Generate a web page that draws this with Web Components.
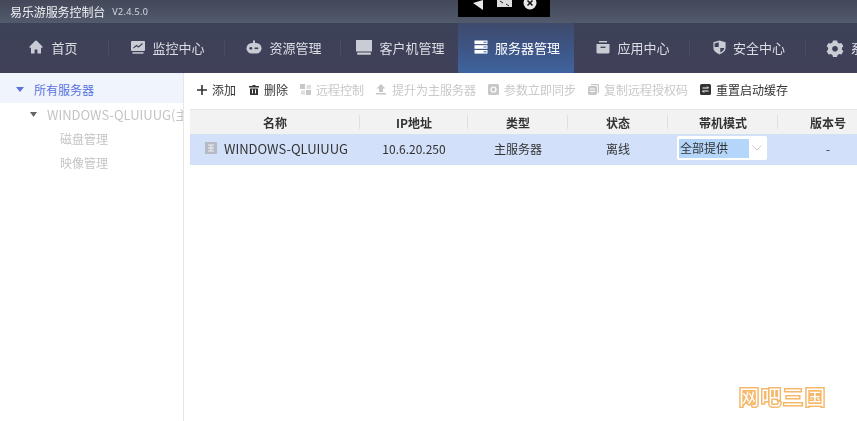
<!DOCTYPE html>
<html lang="zh"><head><meta charset="utf-8"><title>易乐游服务控制台</title>
<style>
html,body{margin:0;height:100%;overflow:hidden;background:#fff}
body{font-family:"Noto Sans CJK SC","Noto Sans",sans-serif;font-size:12px}
</style></head><body>
<yly-app></yly-app>
<script>
const icons={
home:'<path d="M7 .6C6.500 .6 6 1 5.500 1.400L.5 6.500 V7.800H2V13.600H5.600V9.400H8.400V13.600H12V7.800H13.500V6.500L8.500 1.400C8 1 7.500 .6 7 .6z" fill="currentColor"/>',
monitor:'<rect x="0" y="1" width="14" height="10" rx="1" fill="currentColor"/><path d="M2.500 8l3-2.600 2 1.600 4-3.500" stroke="#3c4056" stroke-width="1.100" fill="none"/><rect x="1.500" y="12.200" width="11" height="1.500" fill="currentColor"/>',
robot:'<rect x="7" y=".5" width="2" height="3" fill="currentColor"/><rect x=".5" y="3" width="15" height="10.500" rx="5.200" fill="currentColor"/><circle cx="4.800" cy="8.300" r="1.400" fill="#3c4056"/><rect x="8.600" y="7.500" width="3.600" height="1.600" fill="#3c4056"/>',
pc:'<rect x="0" y="0" width="16" height="11.500" fill="currentColor"/><rect x="1" y="12.500" width="14" height="2.200" rx="1" fill="currentColor"/>',
server:'<rect x=".5" y=".5" width="13" height="3.600" fill="currentColor"/><rect x=".5" y="5.200" width="13" height="3.600" fill="currentColor"/><rect x=".5" y="10" width="13" height="3.600" fill="currentColor"/><path d="M9.500 2.300h3M9.500 7h3M9.500 11.800h3" stroke="#47689f" stroke-width="1"/>',
app:'<rect x="3" y="1" width="8" height="1.400" fill="currentColor"/><path d="M.5 4h13V12a1.500 1.500 0 0 1-1.500 1.500H2A1.500 1.500 0 0 1 .5 12z" fill="currentColor"/><rect x="4.500" y="6.600" width="5" height="1.300" fill="#3c4056"/>',
shield:'<path d="M6.500 .4 12.600 2.300V8c0 3-3 5-6.100 6.400C3.400 13 .4 11 .4 8V2.300z" fill="currentColor"/><path d="M5.700 2.200 1.600 3.400V7H5.700zM7.300 8H11.300C11 10 9 11.700 7.300 12.600z" fill="#3c4056"/>',
gear:'<path fill-rule="evenodd" fill="currentColor" d="M6 .4h4l.6 2 1.800 1 2-.5 2 3.400-1.500 1.500v1.900l1.500 1.500-2 3.400-2-.5-1.800 1-.6 2H6l-.6-2-1.800-1-2 .5-2-3.400L1.100 9.700V7.800L-.4 6.300l2-3.400 2 .5 1.800-1zM8 5.900a2.900 2.900 0 1 0 .01 0z"/>',
plus:'<path d="M5 0v10M0 5h10" stroke="currentColor" stroke-width="1.600"/>',
trash:'<path d="M3.500 1V0h3v1H10v1.500H0V1z M1 3.500h8V10H1z" fill="currentColor"/><path d="M3.500 4.500v4M6.500 4.500v4" stroke="#fff"/>',
remote:'<rect x="0" y="0" width="5" height="5" fill="currentColor"/><rect x="6.500" y="1" width="4.500" height="4" fill="currentColor" opacity=".6"/><rect x="1" y="6.500" width="4" height="4" fill="currentColor" opacity=".6"/><rect x="6" y="6" width="5" height="5" fill="currentColor"/>',
up:'<path d="M5 0 9.500 4.500H7V8H3V4.500H.5z M0 9h10v1.500H0z" fill="currentColor"/>',
sync:'<rect width="11" height="11" rx="1.500" fill="currentColor"/><circle cx="5.500" cy="5.500" r="2.500" fill="none" stroke="#fff" stroke-width="1.200"/>',
copy:'<path d="M3 0h7a1 1 0 0 1 1 1v8H9.800V1.200H3z" fill="currentColor"/><rect y="2" width="9" height="9" rx="1.500" fill="currentColor"/><path d="M2 5h5M2 7.500h5" stroke="#fff"/>',
reset:'<rect width="11" height="11" rx="1.500" fill="currentColor"/><path d="M2.500 4h6L7 2.500M8.500 7h-6L4 8.500" stroke="#fff" fill="none"/>'
};
function svg(n,w,h,vb){return `<svg width="${w}" height="${h}" viewBox="0 0 ${vb||w+' '+h}" style="display:block;flex:none;overflow:visible">${icons[n]}</svg>`}
class Base extends HTMLElement{
 constructor(){super();this.attachShadow({mode:'open'}).innerHTML=this.constructor.html}
}
function def(name,html,extra){
 const c=class extends Base{static html=html};
 if(extra)Object.assign(c.prototype,extra);
 customElements.define(name,c);
}
def('yly-titlebar',`<style>:host{display:flex;align-items:center;height:23px;padding-left:10px;background:linear-gradient(#434859,#525a6d);color:#f0f1f4;position:relative;filter:blur(.35px)}
b{font-weight:400;font-size:12px;letter-spacing:-.1px}i{font-style:normal;font-size:9px;margin-left:7px;color:#d6d9e0;font-family:"Noto Sans",sans-serif;letter-spacing:.35px}
.ov{position:absolute;left:458px;top:0;width:92px;height:17px;background:#000;display:flex;color:#eee}
.ov svg{position:absolute;top:0}</style><b>易乐游服务控制台</b><i>V2.4.5.0</i>
<div class="ov"><svg style="left:14px" width="12" height="10" viewBox="0 0 12 10"><path d="M11 0v10L1 3z" fill="#e8e8e8"/></svg><svg style="left:39px" width="15" height="7" viewBox="0 0 15 7"><path d="M0 0h15v7H0z" fill="#ddd"/><path d="M3 1l3 2M12 6l-3-2" stroke="#222"/></svg><svg style="left:65px" width="14" height="10" viewBox="0 0 14 10"><circle cx="7" cy="3" r="6.500" fill="#e8e8e8"/><path d="M4.500 .5l5 5M9.500 .5l-5 5" stroke="#111" stroke-width="1.500"/></svg></div>`);
def('yly-navitem',`<style>:host{display:flex;align-items:center;justify-content:center;gap:7px;height:50px;width:116px;flex:none;box-sizing:border-box;padding:0 0 1px 2px;font-size:13px;color:#dcdee4;position:relative}
:host([active]){background:linear-gradient(#3f4a6c 0%,#3d5585 50%,#3f649f 100%);color:#fff}
:host([sep])::after{content:"";position:absolute;right:0;top:17px;height:16px;width:1px;background:#494c60}
#i{display:flex;color:#c9ccd4}:host([active]) #i{color:#fff}
</style><span id="i"></span><slot></slot>`,{connectedCallback(){const w=+this.getAttribute('w')||14;this.shadowRoot.getElementById('i').innerHTML=svg(this.getAttribute('icon'),w,this.getAttribute('h')||15,this.getAttribute('vb')||'0 0 14 15')}});
def('yly-nav',`<style>:host{display:flex;height:50px;background:linear-gradient(#3b4257,#41405a);overflow:hidden;filter:blur(.35px)}</style><slot></slot>`);
def('yly-tree',`<style>:host{display:block;width:184px;flex:none;box-sizing:border-box;border-right:1px solid #e6e6e6;overflow:hidden;height:348px;white-space:nowrap;filter:blur(.35px)}
.r{display:flex;align-items:center}
.r svg{flex:none}
.all{height:30px;background:#f0f5fd;color:#5b72e0;padding:3px 0 0 16px;box-sizing:border-box}
.all svg,.s svg{margin-right:10px}
.s{height:24px;color:#c4c4c4;padding-left:30px;margin-top:-1px;font-size:13px}
.c{height:24px;color:#c4c4c4;padding-left:60px}
</style>
<div class="r all"><svg width="8" height="5" viewBox="0 0 8 5"><path d="M0 0h8L4 5z" fill="#5b72e0"/></svg>所有服务器</div>
<div class="r s"><svg width="7" height="5" viewBox="0 0 7 5"><path d="M0 0h7L3.500 5z" fill="#666"/></svg>WINDOWS-QLUIUUG(主</div>
<div class="r c">磁盘管理</div><div class="r c">映像管理</div>`);
def('yly-tool',`<style>:host{display:flex;align-items:center;gap:5px;color:#333;white-space:nowrap}
:host([off]){color:#c8c8c8}#i{display:flex}</style><span id="i"></span><slot></slot>`,{connectedCallback(){const n=this.getAttribute('icon');this.shadowRoot.getElementById('i').innerHTML=svg(n,n=='plus'||n=='trash'?10:11,n=='plus'||n=='trash'?10:11,n=='plus'||n=='trash'?'0 0 10 10':'0 0 11 11')}});
def('yly-toolbar',`<style>:host{display:flex;align-items:center;gap:12px;height:36px;box-sizing:border-box;padding:0 0 3px 13px;filter:blur(.35px)}</style><slot></slot>`);
def('yly-table',`<style>:host{display:block;margin-left:6px;width:700px;filter:blur(.3px)}
.g{display:grid;grid-template-columns:170px 108px 100px 100px 110px 100px}
.h{height:25px;background:#f2f2f2;border-top:1px solid #e8e8e8;box-sizing:border-box;font-weight:700;color:#333}
.h div{display:flex;align-items:center;justify-content:center;position:relative}
.h div::after{content:"";position:absolute;right:0;top:5px;height:14px;width:1px;background:#e0e0e0}
.b{height:31px;background:#d2e0f9;color:#333;box-sizing:border-box;padding-bottom:3px}
.b>div{display:flex;align-items:center;justify-content:center}
.n{justify-content:flex-start!important;padding-left:15px;gap:7px;font-size:13px}
.sel{width:90px;height:24px;flex:none;box-sizing:border-box;background:#fff;border-radius:2px;display:flex;align-items:center;padding:0 2px;margin-left:-2px}
.sel span{display:block;width:70px;height:19px;line-height:18px;background:#b5d6fb;padding-left:1px;box-sizing:border-box}
.sel svg{margin-left:3px}
</style>
<div class="g h"><div>名称</div><div>IP地址</div><div>类型</div><div>状态</div><div>帯机模式</div><div>版本号</div></div>
<div class="g b"><div class="n"><svg width="12" height="12" viewBox="0 0 12 12" style="flex:none"><rect width="12" height="12" fill="#b5bac4"/><path d="M3 3h6M3 6h6M3 9h6M6 3v6" stroke="#eef0f4"/></svg>WINDOWS-QLUIUUG</div><div>10.6.20.250</div><div>主服务器</div><div>离线</div><div><div class="sel"><span>全部提供</span><svg width="10" height="6" viewBox="0 0 10 6"><path d="M.5 .5 5 5 9.500 .5" fill="none" stroke="#ccc"/></svg></div></div><div>-</div></div>`);
def('yly-mark',`<style>:host{position:absolute;right:30px;bottom:13px;font:400 20px/22px "Noto Sans CJK SC",sans-serif;letter-spacing:2px;color:#fff;-webkit-text-stroke:3px #f5b768;paint-order:stroke fill;filter:blur(.3px);white-space:nowrap}</style><slot></slot>`);
def('yly-app',`<style>:host{display:block;width:857px;height:421px;overflow:hidden;position:relative}
.m{display:flex;height:348px}.r{flex:1;min-width:0;overflow:hidden}</style>
<yly-titlebar></yly-titlebar>
<yly-nav>
<yly-navitem icon="home" sep style="width:109px;padding:0 2px 1px 0;gap:8px">首页</yly-navitem>
<yly-navitem icon="monitor" sep>监控中心</yly-navitem>
<yly-navitem icon="robot" w="16" vb="0 0 16 15" sep>资源管理</yly-navitem>
<yly-navitem icon="pc" w="16" vb="0 0 16 15" style="width:117px">客户机管理</yly-navitem>
<yly-navitem icon="server" active>服务器管理</yly-navitem>
<yly-navitem icon="app" sep>应用中心</yly-navitem>
<yly-navitem icon="shield" w="13" vb="0 0 13 15" sep>安全中心</yly-navitem>
<yly-navitem icon="gear" w="16" h="16" vb="0 0 16 16">系统设置</yly-navitem>
</yly-nav>
<div class="m"><yly-tree></yly-tree><div class="r">
<yly-toolbar>
<yly-tool icon="plus">添加</yly-tool><yly-tool icon="trash" style="margin-left:1px">删除</yly-tool><yly-tool icon="remote" off>远程控制</yly-tool><yly-tool icon="up" off>提升为主服务器</yly-tool><yly-tool icon="sync" off>参数立即同步</yly-tool><yly-tool icon="copy" off>复制远程授权码</yly-tool><yly-tool icon="reset">重置启动缓存</yly-tool>
</yly-toolbar>
<yly-table></yly-table></div></div>
<yly-mark>网吧三国</yly-mark>`);
</script></body></html>
